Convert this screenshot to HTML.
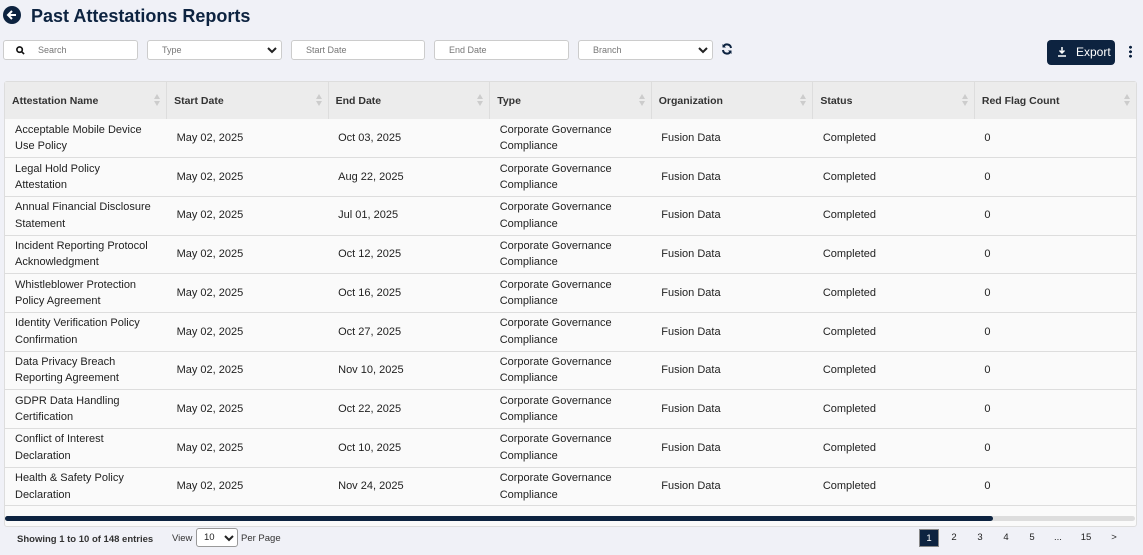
<!DOCTYPE html>
<html><head><meta charset="utf-8"><style>
*{box-sizing:border-box;margin:0;padding:0}
body{width:1143px;height:555px;background:#f0f1f7;font-family:"Liberation Sans",Arial,sans-serif;color:#222;position:relative;overflow:hidden}
.abs{position:absolute}
.title{left:31px;top:6px;font-size:18px;font-weight:bold;color:#0d2340}
.back{left:3px;top:6px;width:18px;height:18px;border-radius:50%;background:#0d2340}
.inp{height:20px;top:40px;background:#fff;border:1px solid #ccc;border-radius:3px;font-size:9px;color:#777;padding-left:14px;line-height:18px}
.sel svg{position:absolute;right:4px;top:5px}
.export{left:1047px;top:40px;width:68px;height:25px;background:#0d2340;border-radius:4px;color:#fff;font-size:12px;line-height:25px;padding-left:29px}
.tbl{left:4px;top:81px;width:1133px;height:446px;background:#fafafa;border:1px solid #ddd;border-radius:3px}
table{border-collapse:collapse;width:1131px;table-layout:fixed}
th{height:37px;background:#ececec;font-size:10.5px;font-weight:bold;text-align:left;padding-left:7px;border-right:1px solid #ddd;position:relative;color:#333}
th:after{content:"";position:absolute;right:6px;top:12px;width:0;height:0;border-left:3px solid transparent;border-right:3px solid transparent;border-bottom:5px solid #ccc}
th:before{content:"";position:absolute;right:6px;top:19px;border-left:3px solid transparent;border-right:3px solid transparent;border-top:5px solid #ccc}
td{height:38.7px;font-size:11px;padding-left:10px;border-bottom:1px solid #ddd;line-height:16.5px;color:#222}
.scroll{left:5px;top:516px;width:1130px;height:5px;background:#ddd;border-radius:3px}
.scroll div{width:988px;height:5px;background:#0d2340;border-radius:3px}
.foot{font-size:9.5px;color:#222}
.pg{top:529px;width:20px;height:18px;font-size:9.5px;text-align:center;line-height:18px}
</style></head><body>
<div class="abs back"><svg width="18" height="18" viewBox="0 0 18 18"><path d="M13 9H5.5M9 5L5 9l4 4" stroke="#fff" stroke-width="2" fill="none"/></svg></div>
<div class="abs title">Past Attestations Reports</div>
<div class="abs inp" style="left:3px;width:135px;padding-left:34px">Search<svg class="abs" style="left:12px;top:5px" width="9" height="9" viewBox="0 0 10 10"><circle cx="4" cy="4" r="3" stroke="#111" stroke-width="1.8" fill="none"/><path d="M6.3 6.3L9 9" stroke="#111" stroke-width="1.8"/></svg></div>
<div class="abs inp sel" style="left:147px;width:135px">Type<svg width="10" height="8" viewBox="0 0 10 8"><path d="M1 2l4 4 4-4" stroke="#222" stroke-width="2" fill="none"/></svg></div>
<div class="abs inp" style="left:291px;width:134px">Start Date</div>
<div class="abs inp" style="left:434px;width:135px">End Date</div>
<div class="abs inp sel" style="left:578px;width:135px">Branch<svg width="10" height="8" viewBox="0 0 10 8"><path d="M1 2l4 4 4-4" stroke="#222" stroke-width="2" fill="none"/></svg></div>
<svg class="abs" style="left:721px;top:43px" width="12" height="12" viewBox="0 0 12 12"><path d="M10 5A4 4 0 0 0 2.5 3.5M2 7a4 4 0 0 0 7.5 1.5" stroke="#0d2340" stroke-width="2" fill="none"/><path d="M1.5 1v3.5H5M10.5 11V7.5H7" fill="#0d2340"/></svg>
<div class="abs export"><svg class="abs" style="left:11px;top:7px" width="8" height="10" viewBox="0 0 8 10"><path d="M4 0v6M1.5 3.5L4 6l2.5-2.5M0 9h8" stroke="#fff" stroke-width="1.5" fill="none"/></svg>Export</div>
<div class="abs" style="left:1129px;top:45px;width:3px;height:13px;background:radial-gradient(circle,#0d2340 1.4px,transparent 1.6px) 0 0/3px 4.5px"></div>
<div class="abs tbl"><table>
<tr><th>Attestation Name</th><th>Start Date</th><th>End Date</th><th>Type</th><th>Organization</th><th>Status</th><th style="border-right:none">Red Flag Count</th></tr>
<tr><td>Acceptable Mobile Device<br>Use Policy</td><td>May 02, 2025</td><td>Oct 03, 2025</td><td>Corporate Governance<br>Compliance</td><td>Fusion Data</td><td>Completed</td><td>0</td></tr>
<tr><td>Legal Hold Policy<br>Attestation</td><td>May 02, 2025</td><td>Aug 22, 2025</td><td>Corporate Governance<br>Compliance</td><td>Fusion Data</td><td>Completed</td><td>0</td></tr>
<tr><td>Annual Financial Disclosure<br>Statement</td><td>May 02, 2025</td><td>Jul 01, 2025</td><td>Corporate Governance<br>Compliance</td><td>Fusion Data</td><td>Completed</td><td>0</td></tr>
<tr><td>Incident Reporting Protocol<br>Acknowledgment</td><td>May 02, 2025</td><td>Oct 12, 2025</td><td>Corporate Governance<br>Compliance</td><td>Fusion Data</td><td>Completed</td><td>0</td></tr>
<tr><td>Whistleblower Protection<br>Policy Agreement</td><td>May 02, 2025</td><td>Oct 16, 2025</td><td>Corporate Governance<br>Compliance</td><td>Fusion Data</td><td>Completed</td><td>0</td></tr>
<tr><td>Identity Verification Policy<br>Confirmation</td><td>May 02, 2025</td><td>Oct 27, 2025</td><td>Corporate Governance<br>Compliance</td><td>Fusion Data</td><td>Completed</td><td>0</td></tr>
<tr><td>Data Privacy Breach<br>Reporting Agreement</td><td>May 02, 2025</td><td>Nov 10, 2025</td><td>Corporate Governance<br>Compliance</td><td>Fusion Data</td><td>Completed</td><td>0</td></tr>
<tr><td>GDPR Data Handling<br>Certification</td><td>May 02, 2025</td><td>Oct 22, 2025</td><td>Corporate Governance<br>Compliance</td><td>Fusion Data</td><td>Completed</td><td>0</td></tr>
<tr><td>Conflict of Interest<br>Declaration</td><td>May 02, 2025</td><td>Oct 10, 2025</td><td>Corporate Governance<br>Compliance</td><td>Fusion Data</td><td>Completed</td><td>0</td></tr>
<tr><td>Health &amp; Safety Policy<br>Declaration</td><td>May 02, 2025</td><td>Nov 24, 2025</td><td>Corporate Governance<br>Compliance</td><td>Fusion Data</td><td>Completed</td><td>0</td></tr>
</table></div>
<div class="abs scroll"><div></div></div>
<div class="abs foot" style="left:17px;top:534px;font-weight:bold;color:#333">Showing 1 to 10 of 148 entries</div>
<div class="abs foot" style="left:172px;top:533px;color:#333">View</div>
<div class="abs" style="left:196px;top:528px;width:42px;height:19px;background:#fff;border:1px solid #999;border-radius:3px;font-size:9.5px;padding-left:7px;line-height:17px">10<svg style="position:absolute;right:3px;top:5px" width="10" height="8" viewBox="0 0 10 8"><path d="M1 2l4 4 4-4" stroke="#222" stroke-width="2" fill="none"/></svg></div>
<div class="abs foot" style="left:241px;top:533px;color:#333">Per Page</div>
<div class="abs pg" style="left:919px;background:#0d2340;color:#fff;border:1px solid #888">1</div>
<div class="abs pg" style="left:944px">2</div>
<div class="abs pg" style="left:970px">3</div>
<div class="abs pg" style="left:996px">4</div>
<div class="abs pg" style="left:1022px">5</div>
<div class="abs pg" style="left:1048px">...</div>
<div class="abs pg" style="left:1076px">15</div>
<div class="abs pg" style="left:1104px">&gt;</div>
</body></html>
